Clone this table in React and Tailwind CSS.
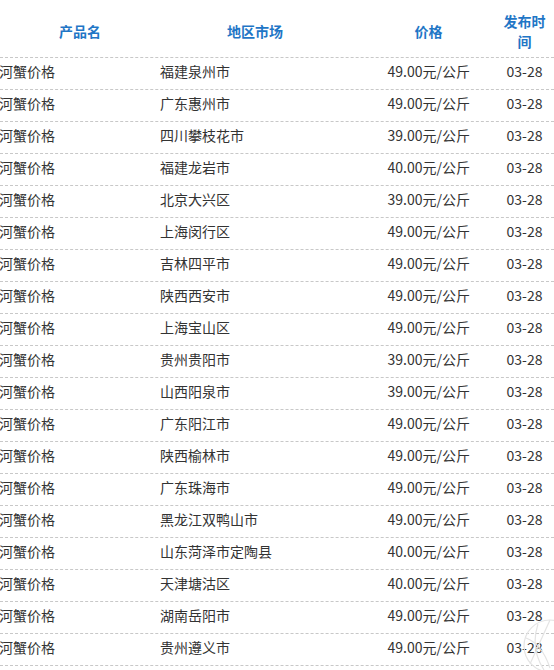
import React from 'react';

const rows = [
    ['福建泉州市', '49.00'],
    ['广东惠州市', '49.00'],
    ['四川攀枝花市', '39.00'],
    ['福建龙岩市', '40.00'],
    ['北京大兴区', '39.00'],
    ['上海闵行区', '49.00'],
    ['吉林四平市', '49.00'],
    ['陕西西安市', '49.00'],
    ['上海宝山区', '49.00'],
    ['贵州贵阳市', '39.00'],
    ['山西阳泉市', '39.00'],
    ['广东阳江市', '49.00'],
    ['陕西榆林市', '49.00'],
    ['广东珠海市', '49.00'],
    ['黑龙江双鸭山市', '49.00'],
    ['山东菏泽市定陶县', '40.00'],
    ['天津塘沽区', '40.00'],
    ['湖南岳阳市', '49.00'],
    ['贵州遵义市', '49.00'],
];

const grid = 'grid grid-cols-[160px_190px_145px_59px] border-b border-dashed border-[#c8c8c8]';

const Watermark = () => (
    <svg className="absolute right-0 bottom-0 pointer-events-none" width="34" height="62" viewBox="0 0 34 62">
        <g fill="none" stroke="#e4e4e4" strokeWidth="1.2">
            <circle cx="30" cy="38" r="26" />
            <path d="M30 12 L10 56" />
            <path d="M6 30 Q22 36 30 60" />
            <path d="M18 16 Q10 40 24 62" />
        </g>
    </svg>
);

const App = () => {
    return (
        <div className="relative w-[554px] h-[670px] bg-white overflow-hidden text-[14px] text-[#333] font-['Noto_Sans_CJK_SC',sans-serif]">
            <div className={`${grid} h-[58px] pt-[5px] items-center font-bold text-[#1f76c6] leading-[20px]`}>
                <div className="text-center">产品名</div>
                <div className="text-center">地区市场</div>
                <div className="text-center pl-[12px]">价格</div>
                <div className="text-center px-[4px]">发布时间</div>
            </div>
            {rows.map(([place, price], i) => (
                <div key={i} className={`${grid} h-[32px] pb-[4px] items-center`}>
                    <div className="-ml-px">河蟹价格</div>
                    <div>{place}</div>
                    <div className="text-right pr-[25px]">{price}元/公斤</div>
                    <div className="text-center">03-28</div>
                </div>
            ))}
            <Watermark />
        </div>
    );
};

export default App;
